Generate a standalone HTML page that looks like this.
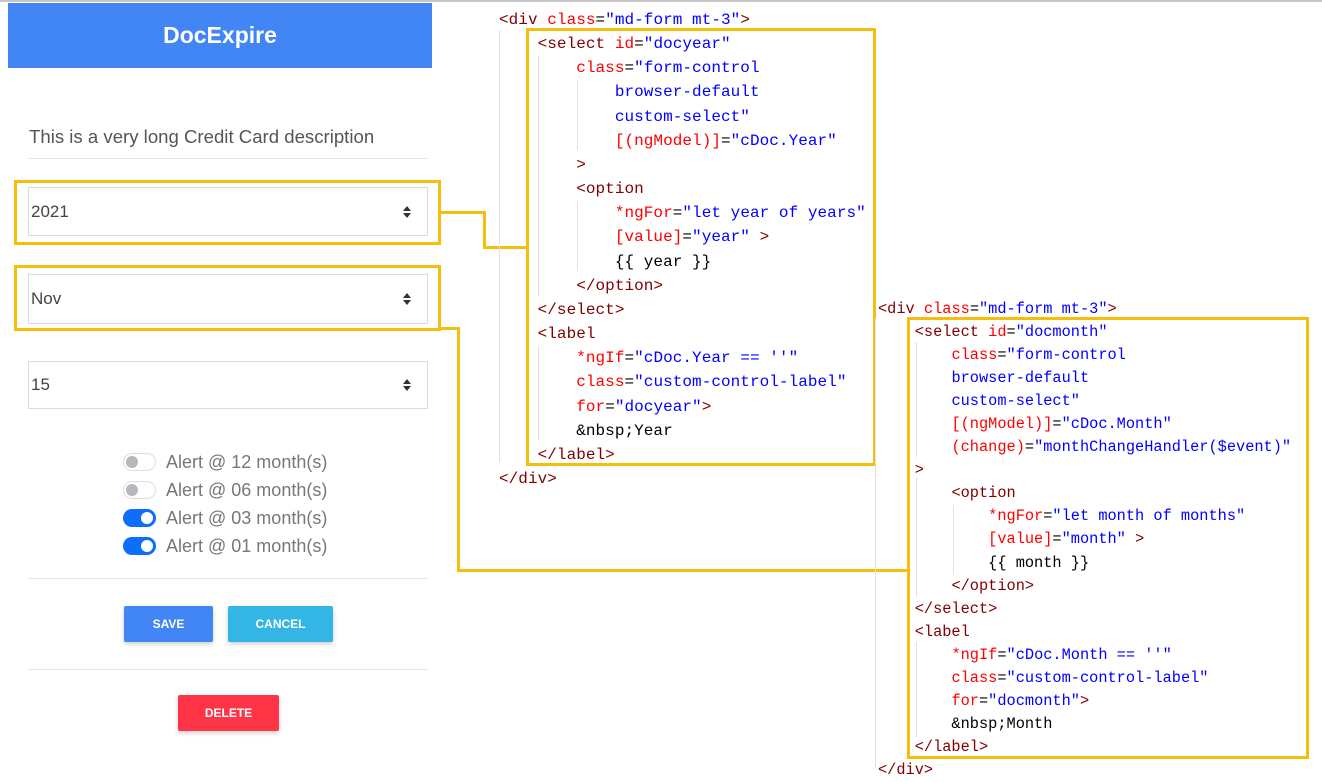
<!DOCTYPE html>
<html><head><meta charset="utf-8"><style>
*{margin:0;padding:0;box-sizing:border-box}
body{width:1322px;height:779px;position:relative;background:#fff;font-family:"Liberation Sans",sans-serif;overflow:hidden}
.abs{position:absolute}
.hdr{left:8px;top:3px;width:424px;height:65px;background:#4285f4;color:#fff;font-weight:bold;font-size:23px;text-align:center;line-height:65px}
.sel{position:absolute;left:28px;width:400px;border:1px solid #dcdcdc;font-size:17px;color:#444;padding-left:2px;display:flex;align-items:center}
.arr{position:absolute;right:16px;top:50%;transform:translateY(-50%);width:8px}
.tg{position:absolute;left:123px;width:33px;height:18px;border-radius:9px}
.tg.off{border:1.5px solid #ddd;background:#fff}
.tg.off::after{content:"";position:absolute;left:2px;top:2px;width:12px;height:12px;border-radius:50%;background:#b5b8bd}
.tg.on{background:#0d6efd}
.tg.on::after{content:"";position:absolute;right:3px;top:3px;width:12px;height:12px;border-radius:50%;background:#fff}
.al{position:absolute;left:166px;font-size:18px;color:#777;line-height:20px}
.btn{position:absolute;color:#fff;font-size:12px;font-weight:bold;text-align:center;box-shadow:0 2px 5px rgba(0,0,0,.2);border-radius:2px}
.hr{position:absolute;left:28px;width:400px;height:1px;background:#e6e6e6}
.y{position:absolute;border:3px solid #f5bd0c}
.yl{position:absolute;background:#f5bd0c}
.code{position:absolute;font-family:"Liberation Mono",monospace;white-space:pre;color:#000}
.c1{font-size:16px;letter-spacing:0.05px}
.c2{font-size:15.3px}
.t{color:#800000}.a{color:#ff0000}.v{color:#0000ff}
.g{position:absolute;width:1px;background:#e2e2e2}
</style></head><body>
<div class="abs" style="left:0;top:0;width:1322px;height:2px;background:#c8c8c8"></div>
<div class="abs hdr">DocExpire</div>
<div class="abs" style="left:29px;top:126px;font-size:18.6px;color:#555">This is a very long Credit Card description</div>
<div class="hr" style="top:158px"></div>

<svg width="0" height="0" style="position:absolute"><defs><symbol id="ar" viewBox="0 0 8 12"><path d="M4 0L8 5H0Z M4 12L0 7H8Z" fill="#333"/></symbol></defs></svg>
<div class="sel" style="top:187px;height:49px">2021<svg class="arr" height="12"><use href="#ar"/></svg></div>
<div class="sel" style="top:274px;height:50px">Nov<svg class="arr" height="12"><use href="#ar"/></svg></div>
<div class="sel" style="top:361px;height:48px">15<svg class="arr" height="12"><use href="#ar"/></svg></div>

<div class="tg off" style="top:453px"></div><div class="al" style="top:452px">Alert @ 12 month(s)</div>
<div class="tg off" style="top:481px"></div><div class="al" style="top:480px">Alert @ 06 month(s)</div>
<div class="tg on" style="top:509px"></div><div class="al" style="top:508px">Alert @ 03 month(s)</div>
<div class="tg on" style="top:537px"></div><div class="al" style="top:536px">Alert @ 01 month(s)</div>
<div class="hr" style="top:578px"></div>
<div class="btn" style="left:124px;top:606px;width:89px;height:36px;line-height:36px;background:#4285f4">SAVE</div>
<div class="btn" style="left:228px;top:606px;width:105px;height:36px;line-height:36px;background:#33b5e5">CANCEL</div>
<div class="hr" style="top:669px"></div>
<div class="btn" style="left:178px;top:695px;width:101px;height:36px;line-height:36px;background:#ff3547">DELETE</div>

<div class="y" style="left:14px;top:180px;width:427px;height:65px"></div>
<div class="y" style="left:14px;top:265px;width:427px;height:66px"></div>
<div class="y" style="left:526px;top:28px;width:350px;height:438px"></div>
<div class="y" style="left:907px;top:317px;width:402px;height:442px"></div>
<div class="yl" style="left:441px;top:211px;width:45px;height:3px"></div>
<div class="yl" style="left:483px;top:211px;width:3px;height:38px"></div>
<div class="yl" style="left:483px;top:246px;width:44px;height:3px"></div>
<div class="yl" style="left:441px;top:327px;width:19px;height:3px"></div>
<div class="yl" style="left:457px;top:327px;width:3px;height:245px"></div>
<div class="yl" style="left:457px;top:569px;width:451px;height:3px"></div>

<div class="g" style="left:499px;top:30px;height:432px"></div>
<div class="g" style="left:538px;top:56px;height:240px"></div>
<div class="g" style="left:577px;top:80px;height:70px"></div>
<div class="g" style="left:577px;top:201px;height:70px"></div>
<div class="g" style="left:538px;top:346px;height:95px"></div>
<div class="g" style="left:875px;top:318px;height:450px"></div>
<div class="g" style="left:916px;top:342px;height:115px"></div>
<div class="g" style="left:953px;top:505px;height:70px"></div>
<div class="g" style="left:916px;top:477px;height:120px"></div>
<div class="g" style="left:916px;top:642px;height:95px"></div>

<div class="code c1" style="left:499px;top:8px;line-height:24.16px"><span class="t">&lt;div</span> <span class="a">class</span>=<span class="v">"md-form mt-3"</span><span class="t">&gt;</span>
    <span class="t">&lt;select</span> <span class="a">id</span>=<span class="v">"docyear"</span>
        <span class="a">class</span>=<span class="v">"form-control</span>
            <span class="v">browser-default</span>
            <span class="v">custom-select"</span>
            <span class="a">[(ngModel)]</span>=<span class="v">"cDoc.Year"</span>
        <span class="t">&gt;</span>
        <span class="t">&lt;option</span>
            <span class="a">*ngFor</span>=<span class="v">"let year of years"</span>
            <span class="a">[value]</span>=<span class="v">"year"</span> <span class="t">&gt;</span>
            {{ year }}
        <span class="t">&lt;/option&gt;</span>
    <span class="t">&lt;/select&gt;</span>
    <span class="t">&lt;label</span>
        <span class="a">*ngIf</span>=<span class="v">"cDoc.Year == ''"</span>
        <span class="a">class</span>=<span class="v">"custom-control-label"</span>
        <span class="a">for</span>=<span class="v">"docyear"</span><span class="t">&gt;</span>
        &amp;nbsp;Year
    <span class="t">&lt;/label&gt;</span>
<span class="t">&lt;/div&gt;</span></div>

<div class="code c2" style="left:878px;top:298px;line-height:23.05px"><span class="t">&lt;div</span> <span class="a">class</span>=<span class="v">"md-form mt-3"</span><span class="t">&gt;</span>
    <span class="t">&lt;select</span> <span class="a">id</span>=<span class="v">"docmonth"</span>
        <span class="a">class</span>=<span class="v">"form-control</span>
        <span class="v">browser-default</span>
        <span class="v">custom-select"</span>
        <span class="a">[(ngModel)]</span>=<span class="v">"cDoc.Month"</span>
        <span class="a">(change)</span>=<span class="v">"monthChangeHandler($event)"</span>
    <span class="t">&gt;</span>
        <span class="t">&lt;option</span>
            <span class="a">*ngFor</span>=<span class="v">"let month of months"</span>
            <span class="a">[value]</span>=<span class="v">"month"</span> <span class="t">&gt;</span>
            {{ month }}
        <span class="t">&lt;/option&gt;</span>
    <span class="t">&lt;/select&gt;</span>
    <span class="t">&lt;label</span>
        <span class="a">*ngIf</span>=<span class="v">"cDoc.Month == ''"</span>
        <span class="a">class</span>=<span class="v">"custom-control-label"</span>
        <span class="a">for</span>=<span class="v">"docmonth"</span><span class="t">&gt;</span>
        &amp;nbsp;Month
    <span class="t">&lt;/label&gt;</span>
<span class="t">&lt;/div&gt;</span></div>
</body></html>
